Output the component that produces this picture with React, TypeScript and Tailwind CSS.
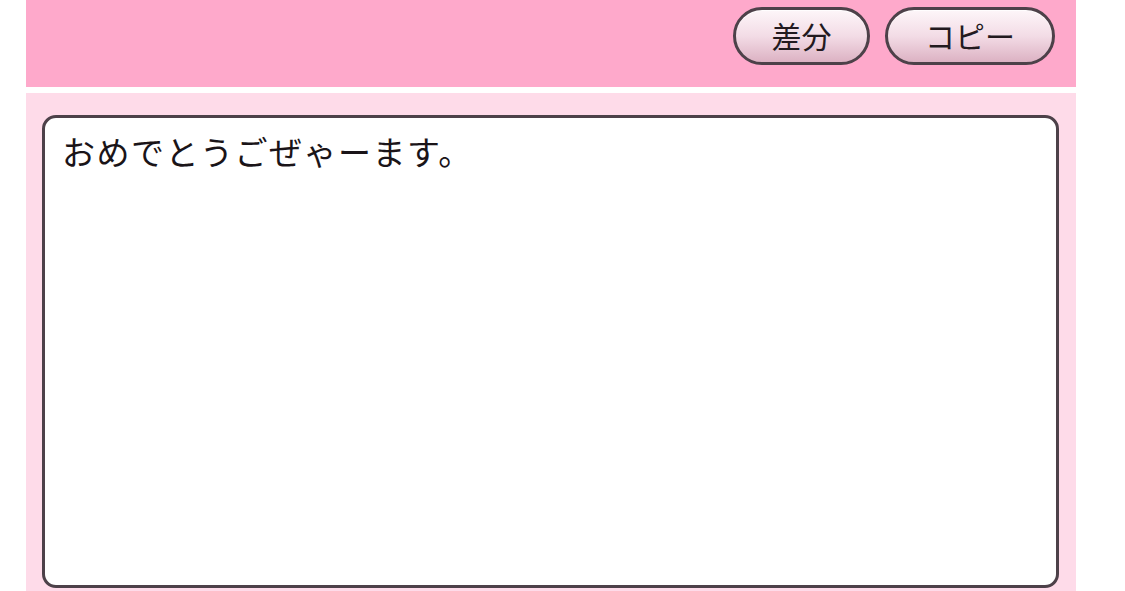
import React from "react";

const font = { fontFamily: '"Noto Sans CJK JP", "Noto Sans", sans-serif' };

function PillButton({ label, width }: { label: string; width: string }) {
  return (
    <button
      className={`${width} h-[58px] rounded-full border-[3px] border-[#4d4149] bg-gradient-to-b from-[#fdf6f9] via-[#f3dce6] to-[#dcb2c3] text-[30px] leading-none text-[#231a1f] flex items-center justify-center pb-[3px] shadow-[inset_0_1px_0_rgba(255,255,255,0.8)]`}
      style={font}
    >
      {label}
    </button>
  );
}

export default function App() {
  return (
    <div className="w-[1125px] h-[591px] bg-white overflow-hidden" style={font}>
      <div className="ml-[26px] w-[1050px] flex flex-col">
        <div className="h-[87px] bg-[#fea9cb] flex items-start justify-end gap-[15px] pt-[7px] pr-[21px]">
          <PillButton label="差分" width="w-[137px]" />
          <PillButton label="コピー" width="w-[170px]" />
        </div>
        <div className="mt-[6px] h-[520px] bg-[#fedbe9] pt-[22px] pl-[16px] pr-[17px]">
          <textarea
            className="block w-full h-[473px] resize-none rounded-[14px] border-[3px] border-[#4d4149] bg-white px-[17px] pt-[12px] text-[33px] tracking-[1.5px] leading-[1.3] text-[#1a1418] outline-none"
            style={font}
            defaultValue="おめでとうごぜゃーます。"
          />
        </div>
      </div>
    </div>
  );
}
